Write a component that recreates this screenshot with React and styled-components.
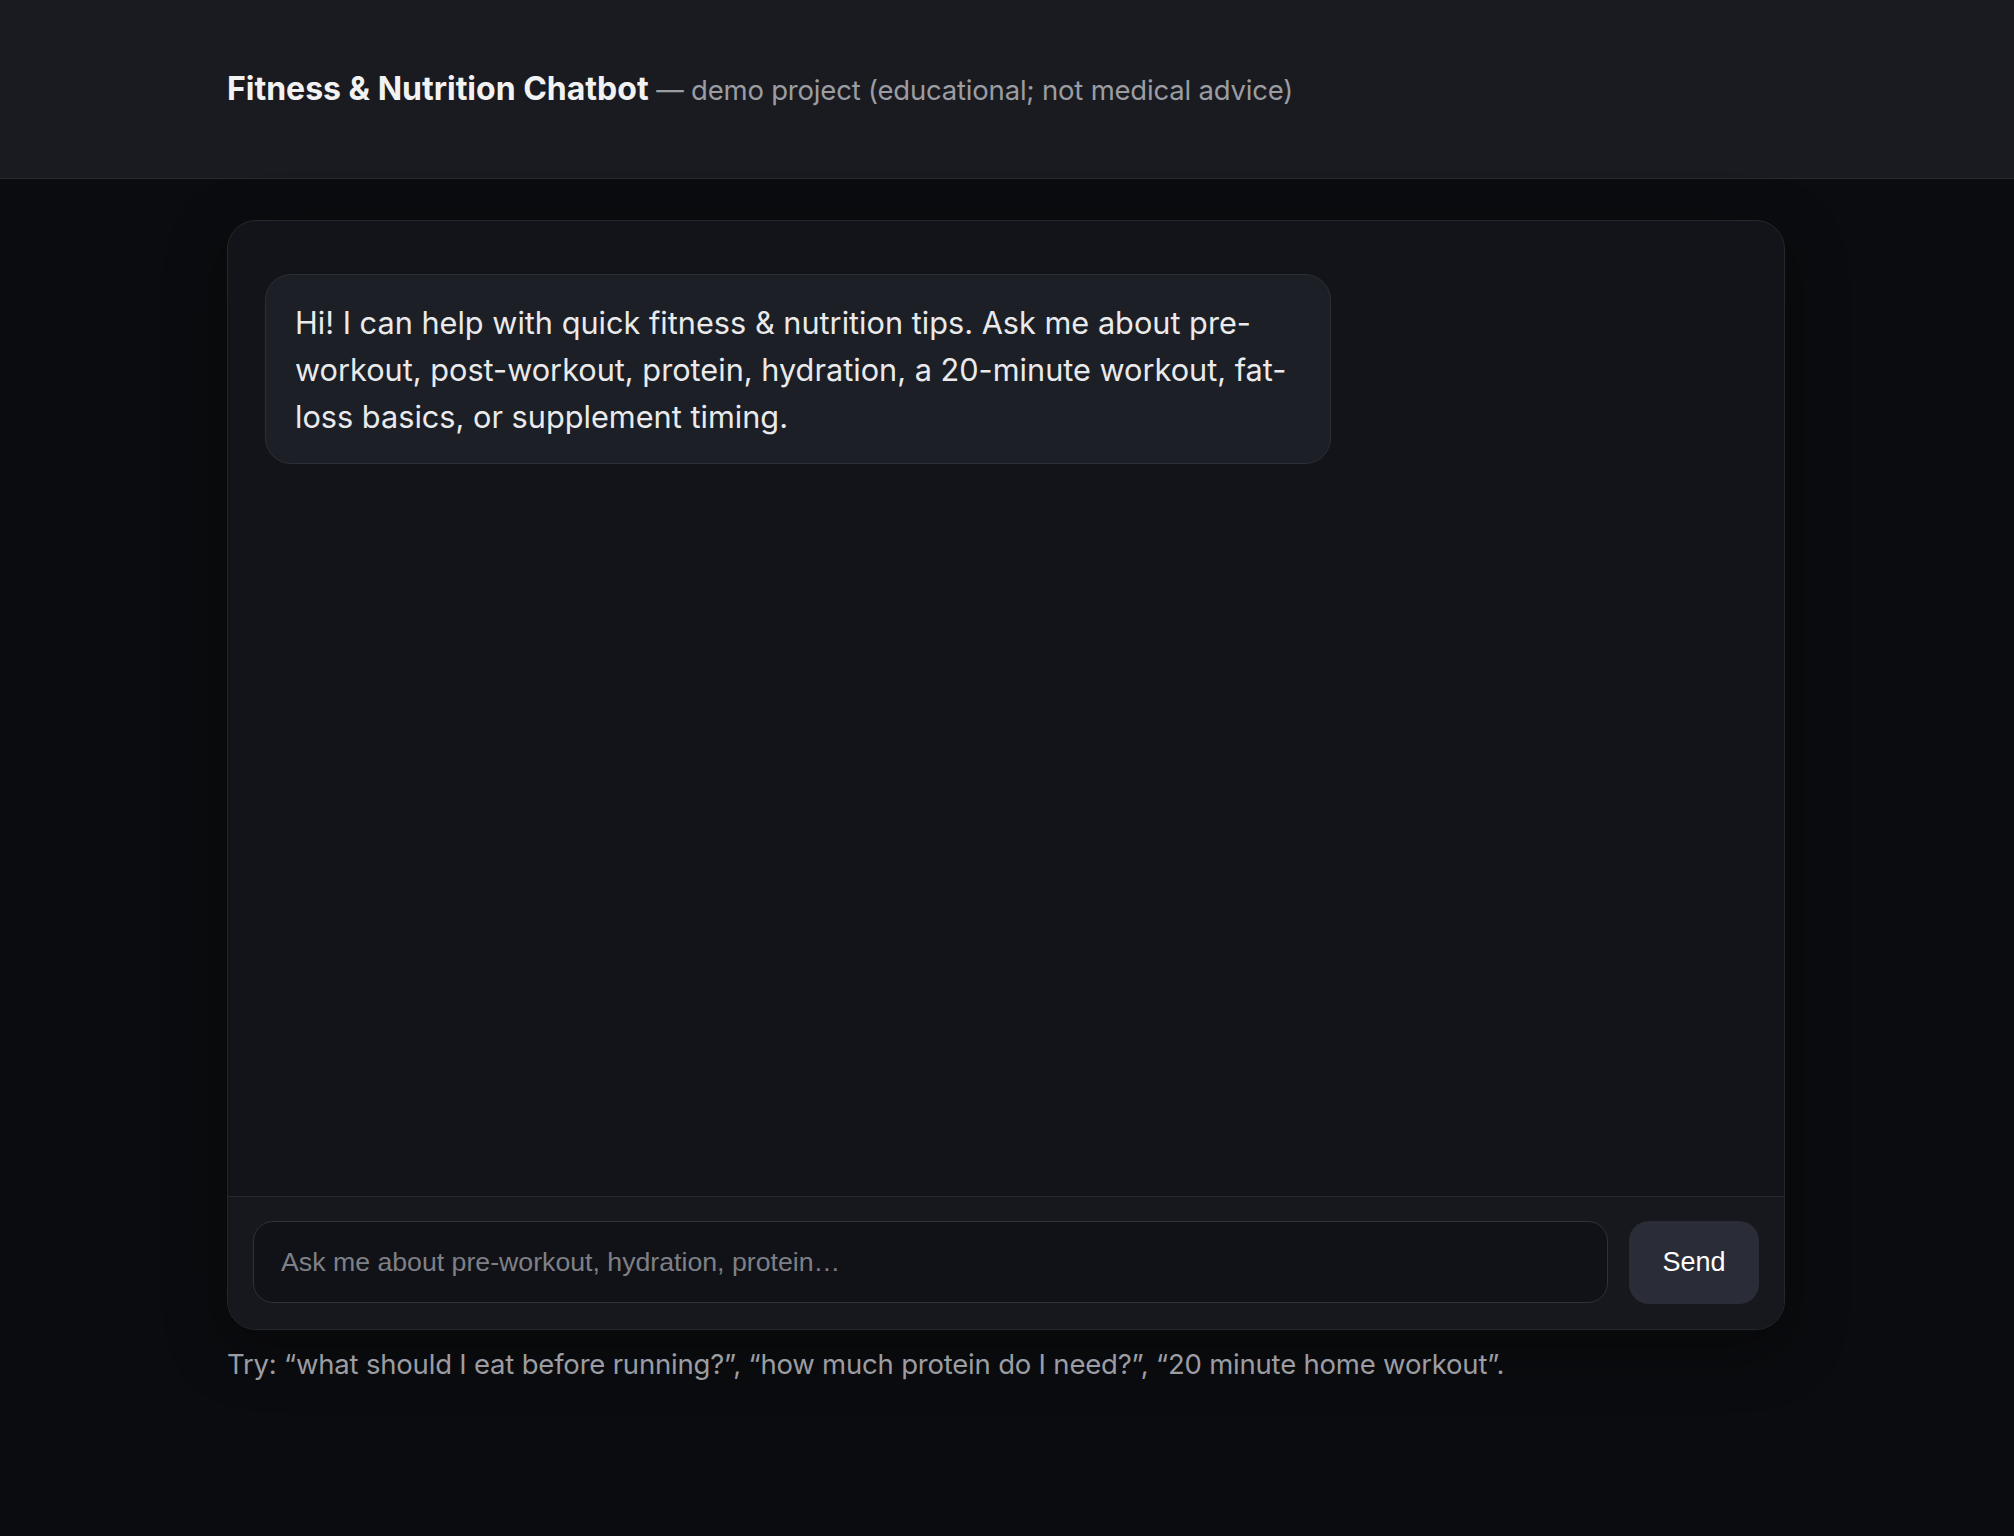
import React, { useState } from "react";
import styled, { createGlobalStyle } from "styled-components";

const GlobalStyle = createGlobalStyle`
  html, body {
    margin: 0;
    padding: 0;
    background: #0b0c0f;
  }
  body {
    font-family: Inter, "Noto Sans", "Liberation Sans", sans-serif;
    color: #e9e9eb;
    min-height: 1536px;
  }
  * { box-sizing: border-box; }
`;

const Header = styled.header`
  background: #1a1b20;
  border-bottom: 1px solid #2a2b31;
  height: 179px;
  display: flex;
  align-items: center;
`;

const Wrap = styled.div`
  width: 1560px;
  margin: 0 auto;
  padding-right: 2px;
`;

const Title = styled.h1`
  margin: 0;
  font-size: 32px;
  font-weight: 700;
  color: #f2f2f3;
  line-height: 1.2;
`;

const Subtitle = styled.span`
  font-size: 27.5px;
  font-weight: 400;
  color: #9b9da3;
  letter-spacing: -0.2px;
`;

const Main = styled.main`
  padding-top: 41px;
`;

const Card = styled.section`
  background: #131419;
  border: 1px solid #25272d;
  border-radius: 29px;
  overflow: hidden;
  box-shadow: 0 18px 60px rgba(0, 0, 0, 0.35);
`;

const Messages = styled.div`
  height: 975px;
  padding: 53px 37px;
  display: flex;
  flex-direction: column;
  gap: 20px;
  overflow-y: auto;
`;

const Bubble = styled.div`
  align-self: ${(p) => (p.mine ? "flex-end" : "flex-start")};
  max-width: 1066px;
  padding: 24px 29px 23px;
  background: ${(p) => (p.mine ? "#23324a" : "#1c1f26")};
  border: 1px solid #2c2f37;
  border-radius: 26px;
  font-size: 30.7px;
  line-height: 47px;
  color: #eaeaec;
`;

const Composer = styled.form`
  display: flex;
  gap: 21px;
  padding: 24px 25px 25px;
  background: #17181d;
  border-top: 1px solid #26282e;
`;

const Input = styled.input`
  flex: 1;
  height: 82px;
  padding: 0 27px;
  background: #111217;
  border: 1.5px solid #2f323a;
  border-radius: 20px;
  color: #e9e9eb;
  font-family: "Liberation Sans", Arial, sans-serif;
  font-size: 26.7px;
  outline: none;

  &::placeholder {
    color: #7e8086;
  }
`;

const SendButton = styled.button`
  width: 130px;
  height: 83px;
  border: none;
  border-radius: 20px;
  background: #2a2d37;
  color: #ffffff;
  font-family: "Liberation Sans", Arial, sans-serif;
  font-size: 27px;
  cursor: pointer;
`;

const Hint = styled.p`
  margin: 14px 0 0;
  font-size: 27.5px;
  line-height: 1.5;
  color: #9b9da3;
  letter-spacing: -0.2px;
`;

const greeting =
  "Hi! I can help with quick fitness & nutrition tips. Ask me about pre-workout, post-workout, protein, hydration, a 20-minute workout, fat-loss basics, or supplement timing.";

export default function App() {
  const [messages, setMessages] = useState([{ from: "bot", text: greeting }]);
  const [draft, setDraft] = useState("");

  const handleSubmit = (event) => {
    event.preventDefault();
    if (!draft.trim()) return;
    setMessages([...messages, { from: "me", text: draft.trim() }]);
    setDraft("");
  };

  return (
    <>
      <GlobalStyle />
      <Header>
        <Wrap>
          <Title>
            Fitness &amp; Nutrition Chatbot{" "}
            <Subtitle>— demo project (educational; not medical advice)</Subtitle>
          </Title>
        </Wrap>
      </Header>
      <Main>
        <Wrap>
          <Card>
            <Messages>
              {messages.map((m, i) => (
                <Bubble key={i} mine={m.from === "me"}>
                  {m.text}
                </Bubble>
              ))}
            </Messages>
            <Composer onSubmit={handleSubmit}>
              <Input
                value={draft}
                onChange={(e) => setDraft(e.target.value)}
                placeholder="Ask me about pre-workout, hydration, protein…"
              />
              <SendButton type="submit">Send</SendButton>
            </Composer>
          </Card>
          <Hint>
            Try: “what should I eat before running?”, “how much protein do I need?”, “20 minute home workout”.
          </Hint>
        </Wrap>
      </Main>
    </>
  );
}
